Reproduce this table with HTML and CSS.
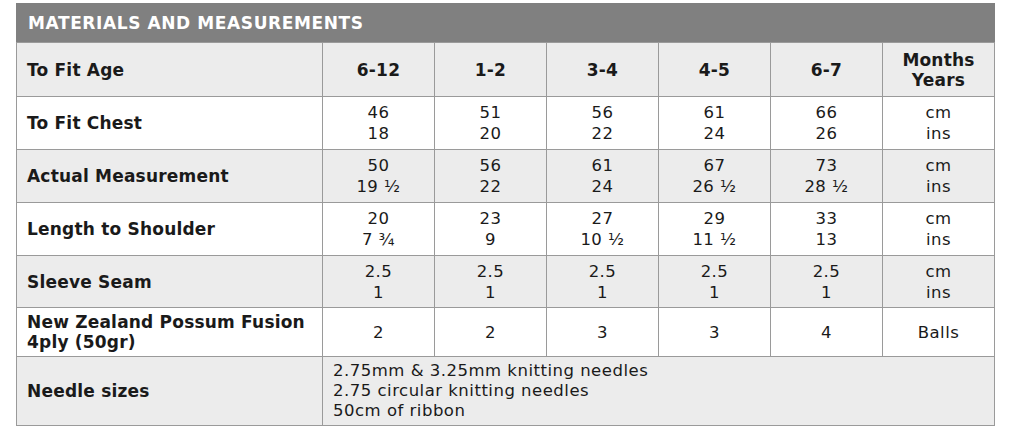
FILE: index.html
```html
<!DOCTYPE html>
<html>
<head>
<meta charset="utf-8">
<link rel="stylesheet" href="styles.css">
</head>
<body>
<table class="mm">
  <colgroup>
    <col class="c-label">
    <col class="c-val"><col class="c-val"><col class="c-val"><col class="c-val"><col class="c-val"><col class="c-val">
  </colgroup>
  <tr class="title-row"><th colspan="7" class="title">MATERIALS AND MEASUREMENTS</th></tr>
  <tr class="grey head h54">
    <th class="label">To Fit Age</th>
    <th>6-12</th><th>1-2</th><th>3-4</th><th>4-5</th><th>6-7</th><th>Months<br>Years</th>
  </tr>
  <tr class="white h53">
    <th class="label">To Fit Chest</th>
    <td>46<br>18</td><td>51<br>20</td><td>56<br>22</td><td>61<br>24</td><td>66<br>26</td><td>cm<br>ins</td>
  </tr>
  <tr class="grey h53">
    <th class="label">Actual Measurement</th>
    <td>50<br>19 ½</td><td>56<br>22</td><td>61<br>24</td><td>67<br>26 ½</td><td>73<br>28 ½</td><td>cm<br>ins</td>
  </tr>
  <tr class="white h53">
    <th class="label">Length to Shoulder</th>
    <td>20<br>7 ¾</td><td>23<br>9</td><td>27<br>10 ½</td><td>29<br>11 ½</td><td>33<br>13</td><td>cm<br>ins</td>
  </tr>
  <tr class="grey h52">
    <th class="label">Sleeve Seam</th>
    <td>2.5<br>1</td><td>2.5<br>1</td><td>2.5<br>1</td><td>2.5<br>1</td><td>2.5<br>1</td><td>cm<br>ins</td>
  </tr>
  <tr class="white h49">
    <th class="label">New Zealand Possum Fusion<br>4ply (50gr)</th>
    <td>2</td><td>2</td><td>3</td><td>3</td><td>4</td><td>Balls</td>
  </tr>
  <tr class="grey h69">
    <th class="label">Needle sizes</th>
    <td colspan="6" class="notes">2.75mm &amp; 3.25mm knitting needles<br>2.75 circular knitting needles<br>50cm of ribbon</td>
  </tr>
</table>
</body>
</html>
```

FILE: styles.css
```css
html, body {
  margin: 0;
  padding: 0;
  background: #ffffff;
}
body {
  padding: 3px 0 0 16px;
  font-family: "DejaVu Sans", Verdana, sans-serif;
  color: #1a1a1a;
}
.mm {
  border-collapse: collapse;
  width: 979px;
  table-layout: fixed;
}
.c-label { width: 306px; }
.c-val { width: 112px; }
.mm th, .mm td {
  border: 1px solid #9a9a9a;
  padding: 0;
  text-align: center;
  vertical-align: middle;
}
.mm td {
  font-size: 16.5px;
  line-height: 21px;
  font-weight: normal;
  letter-spacing: 0.5px;
}
.mm th {
  font-size: 17px;
  line-height: 20px;
  font-weight: bold;
  letter-spacing: 0.2px;
}
.title-row th.title {
  background: #808080;
  color: #ffffff;
  text-align: left;
  padding-left: 11px;
  height: 38px;
  font-size: 17px;
  letter-spacing: 0.6px;
  border-color: #808080;
  border-bottom: 1px solid #9a9a9a;
}
.mm th.label {
  text-align: left;
  padding-left: 10px;
}
.grey th, .grey td { background: #ececec; }
.white th, .white td { background: #ffffff; }
.h54 th, .h54 td { height: 53px; }
.h53 th, .h53 td { height: 52px; }
.h52 th, .h52 td { height: 51px; }
.h49 th, .h49 td { height: 48px; }
.h69 th, .h69 td { height: 68px; }
.mm td.notes {
  text-align: left;
  padding-left: 10px;
  line-height: 20px;
}
```
